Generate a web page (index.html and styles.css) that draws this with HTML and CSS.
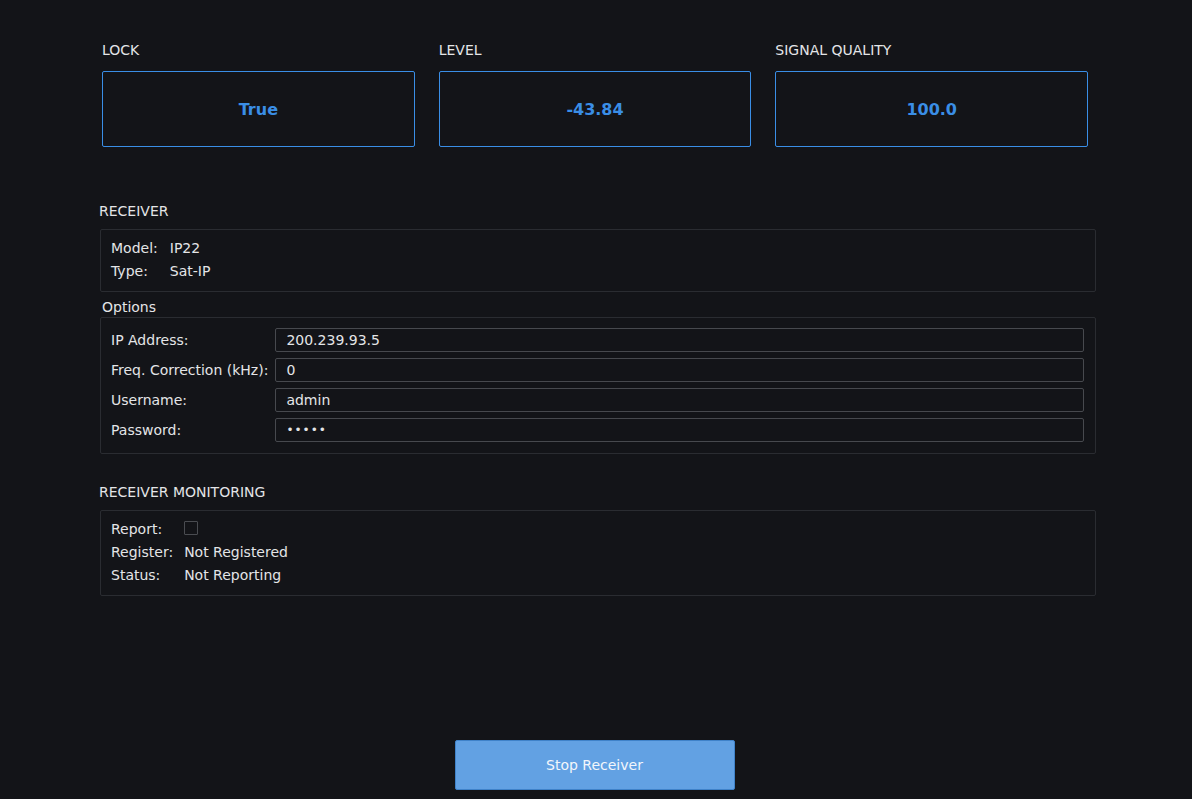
FILE: index.html
```html
<!DOCTYPE html>
<html>
<head>
<meta charset="utf-8">
<link rel="stylesheet" href="styles.css">
</head>
<body>
<div class="page">
  <div class="metrics">
    <div class="metric">
      <div class="metric-label">LOCK</div>
      <div class="metric-card">True</div>
    </div>
    <div class="metric">
      <div class="metric-label">LEVEL</div>
      <div class="metric-card">-43.84</div>
    </div>
    <div class="metric">
      <div class="metric-label">SIGNAL QUALITY</div>
      <div class="metric-card">100.0</div>
    </div>
  </div>

  <div class="section-title first">RECEIVER</div>
  <div class="panel info">
    <div class="kv">
      <span>Model:</span><span>IP22</span>
      <span>Type:</span><span>Sat-IP</span>
    </div>
  </div>
  <div class="sub-title">Options</div>
  <div class="panel options">
    <label>IP Address:</label><div class="input">200.239.93.5</div>
    <label>Freq. Correction (kHz):</label><div class="input">0</div>
    <label>Username:</label><div class="input">admin</div>
    <label>Password:</label><div class="input pw">•••••</div>
  </div>

  <div class="section-title second">RECEIVER MONITORING</div>
  <div class="panel info">
    <div class="kv mon">
      <span>Report:</span><span class="check-cell"><span class="checkbox"></span></span>
      <span>Register:</span><span>Not Registered</span>
      <span>Status:</span><span>Not Reporting</span>
    </div>
  </div>

  <div class="actions">
    <button class="btn">Stop Receiver</button>
  </div>
</div>
</body>
</html>
```
FILE: styles.css
```css
html, body {
  margin: 0;
  padding: 0;
  background: #131418;
}
body {
  font-family: "DejaVu Sans", sans-serif;
  font-size: 14px;
  color: #e4e5e7;
}
.page {
  width: 996px;
  margin-left: 100px;
  padding-top: 40px;
}
.metrics {
  display: flex;
  gap: 24px;
  padding: 0 8px 0 2px;
}
.metric {
  flex: 1;
}
.metric-label {
  line-height: 20px;
  margin-bottom: 11px;
}
.metric-card {
  height: 74px;
  border: 1px solid #3a8ee6;
  border-radius: 2px;
  display: flex;
  align-items: center;
  justify-content: center;
  color: #3a8ee6;
  font-weight: bold;
  font-size: 16px;
}
.section-title {
  line-height: 20px;
  margin-left: -1px;
  margin-bottom: 8px;
}
.section-title.first { margin-top: 54px; }
.section-title.second { margin-top: 28px; }
.sub-title {
  line-height: 20px;
  margin-top: 5px;
  padding-left: 2px;
}
.panel {
  border: 1px solid #2a2c31;
  border-radius: 2px;
}
.info {
  padding: 7px 10px 8px;
}
.kv {
  display: grid;
  grid-template-columns: auto 1fr;
  column-gap: 12px;
  line-height: 23px;
}
.kv.mon { column-gap: 11px; }
.check-cell {
  display: flex;
  align-items: flex-start;
  padding-top: 3px;
  height: 20px;
}
.checkbox {
  display: block;
  width: 12px;
  height: 12px;
  border: 1px solid #4a4c51;
  border-radius: 1px;
}
.options {
  display: grid;
  grid-template-columns: auto 1fr;
  column-gap: 7px;
  row-gap: 6px;
  padding: 10px 11px 11px 10px;
  align-items: center;
}
.options label {
  line-height: 24px;
}
.input {
  height: 22px;
  line-height: 22px;
  border: 1px solid #47494e;
  border-radius: 2px;
  padding: 0 10px;
}
.input.pw {
  letter-spacing: 1px;
  font-size: 12px;
}
.actions {
  display: flex;
  justify-content: center;
  margin-top: 144px;
  padding-right: 7px;
}
.btn {
  width: 280px;
  height: 50px;
  background: #62a1e3;
  border: 1px solid #3f82c9;
  border-radius: 2px;
  color: #f2f6fb;
  font-family: "DejaVu Sans", sans-serif;
  font-size: 14px;
}
```
